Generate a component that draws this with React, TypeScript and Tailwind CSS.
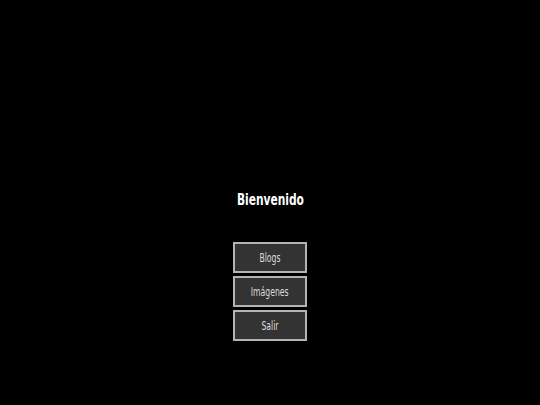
export default function App() {
  return (
    <div className="w-[540px] h-[405px] bg-black flex flex-col items-center pt-[188px] font-stretch-condensed" style={{ fontFamily: '"DejaVu Sans", sans-serif' }}>
      <h1 className="text-white text-[15px] font-bold leading-[24px] h-[24px] scale-x-[0.79]">Bienvenido</h1>
      <div className="mt-[30px] flex flex-col gap-[3px]">
        {["Blogs", "Imágenes", "Salir"].map((t) => (
          <button key={t} className="w-[74px] h-[31px] bg-[#333333] border-2 border-[#b4b4b4] text-[#dddddd] text-[13px] flex items-center justify-center">
            <span className="inline-block scale-x-[0.66]">{t}</span>
          </button>
        ))}
      </div>
    </div>
  );
}
